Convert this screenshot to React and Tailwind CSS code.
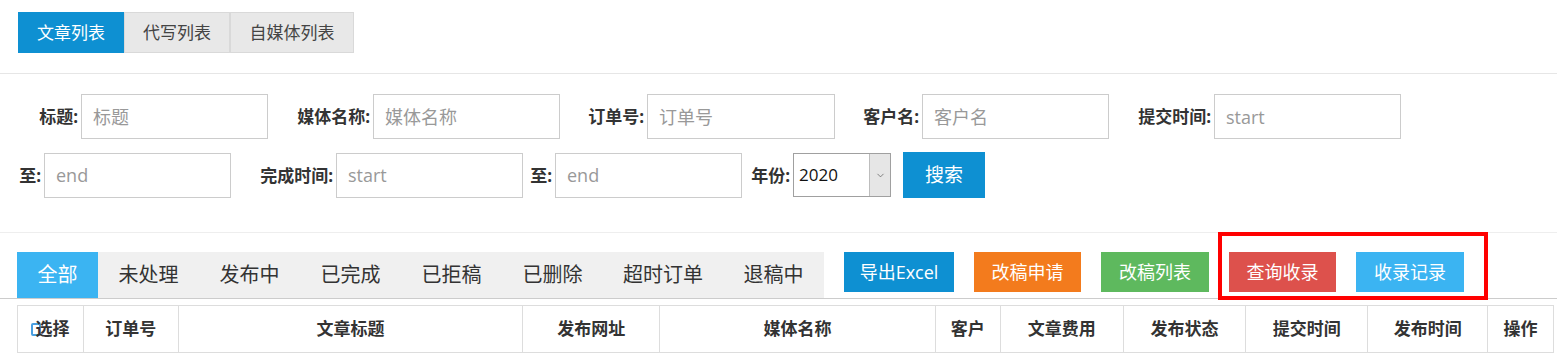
import { ChevronDown } from 'lucide-react';

const font = { fontFamily: '"Open Sans", "Noto Sans CJK SC", sans-serif' };

function Field({ label, labelW, placeholder, inputW = 'w-[187px]' }) {
    return (
        <div className="flex items-center">
            <div className={`${labelW} text-right text-[17px] font-bold text-[#333] leading-none`}>{label}</div>
            <input
                placeholder={placeholder}
                className={`${inputW} ml-[3px] h-[45px] border border-[#ccc] px-[11px] text-[18px] text-[#333] placeholder:text-[#999] outline-none`}
            />
        </div>
    );
}

export default function App() {
    const topTabs = [
        { label: '文章列表', w: 'w-[106px]', active: true },
        { label: '代写列表', w: 'w-[106px]' },
        { label: '自媒体列表', w: 'w-[124px]' },
    ];

    const statusTabs = [
        { label: '全部', w: 'w-[81px]', active: true },
        { label: '未处理', w: 'w-[101px]' },
        { label: '发布中', w: 'w-[101px]' },
        { label: '已完成', w: 'w-[101px]' },
        { label: '已拒稿', w: 'w-[101px]' },
        { label: '已删除', w: 'w-[101px]' },
        { label: '超时订单', w: 'w-[120px]' },
        { label: '退稿中', w: 'w-[101px]' },
    ];

    const actions = [
        { label: '导出Excel', cls: 'w-[110px] bg-[#0e90d2]' },
        { label: '改稿申请', cls: 'w-[107px] bg-[#f37b1d]' },
        { label: '改稿列表', cls: 'w-[108px] bg-[#5eb95e]' },
        { label: '查询收录', cls: 'w-[107px] bg-[#dd514c]' },
        { label: '收录记录', cls: 'w-[108px] bg-[#3bb4f2]' },
    ];

    const columns = [
        { label: '选择', w: 'w-[65px]', check: true },
        { label: '订单号', w: 'w-[95px]' },
        { label: '文章标题', w: 'w-[345px]' },
        { label: '发布网址', w: 'w-[137px]' },
        { label: '媒体名称', w: 'w-[276px]' },
        { label: '客户', w: 'w-[65px]' },
        { label: '文章费用', w: 'w-[123px]' },
        { label: '发布状态', w: 'w-[123px]' },
        { label: '提交时间', w: 'w-[122px]' },
        { label: '发布时间', w: 'w-[120px]' },
        { label: '操作', w: 'w-[66px]' },
    ];

    return (
        <div className="w-[1557px] h-[353px] overflow-hidden bg-white" style={font}>
            {/* Top tabs */}
            <div className="pt-[12px] pl-[18px] pb-[20px] border-b border-[#e6e6e6]">
                <div className="flex">
                    {topTabs.map((t) => (
                        <div
                            key={t.label}
                            className={`${t.w} h-[41px] flex items-center justify-center text-[17px] ${
                                t.active ? 'bg-[#0e90d2] text-white' : 'bg-[#e8e8e8] text-[#444] border border-[#d9d9d9]'
                            }`}
                        >
                            {t.label}
                        </div>
                    ))}
                </div>
            </div>

            {/* Search form */}
            <div className="pt-[20px] pb-[34px] pl-[17px] border-b border-[#eee]">
                <div className="flex items-center">
                    <Field label="标题:" labelW="w-[61px]" placeholder="标题" />
                    <Field label="媒体名称:" labelW="w-[102px]" placeholder="媒体名称" />
                    <Field label="订单号:" labelW="w-[84px]" placeholder="订单号" inputW="w-[188px]" />
                    <Field label="客户名:" labelW="w-[84px]" placeholder="客户名" />
                    <Field label="提交时间:" labelW="w-[102px]" placeholder="start" />
                </div>
                <div className="flex items-center mt-[13px]">
                    <Field label="至:" labelW="w-[24px]" placeholder="end" />
                    <Field label="完成时间:" labelW="w-[102px]" placeholder="start" />
                    <Field label="至:" labelW="w-[29px]" placeholder="end" />
                    <div className="w-[48px] text-right text-[17px] font-bold text-[#333] leading-none">年份:</div>
                    <div className="ml-[3px] w-[98px] h-[44px] flex border border-[#a0a0a0]">
                        <div className="flex-1 flex items-center pl-[5px] text-[17px] text-[#111]">2020</div>
                        <div className="w-[21px] bg-[#e6e6e6] border-l border-[#bdbdbd] flex items-center justify-center">
                            <ChevronDown className="w-[11px] h-[11px] text-[#555]" strokeWidth={1.5} />
                        </div>
                    </div>
                    <button className="ml-[12px] w-[82px] h-[46px] bg-[#0e90d2] text-white text-[19px]">搜索</button>
                </div>
            </div>

            {/* Status tabs + actions */}
            <div className="relative pt-[19px] border-b border-[#ccc]">
                <div className="flex items-start pl-[17px]">
                    <div className="flex h-[46px] bg-[#f0f0f0]">
                        {statusTabs.map((t) => (
                            <div
                                key={t.label}
                                className={`${t.w} flex items-center justify-center text-[20px] ${
                                    t.active ? 'bg-[#3bb4f2] text-white' : 'text-[#333]'
                                }`}
                            >
                                {t.label}
                            </div>
                        ))}
                    </div>
                    <div className="flex gap-[20px] ml-[20px]">
                        {actions.map((a) => (
                            <button key={a.label} className={`${a.cls} h-[40px] text-white text-[18px]`}>
                                {a.label}
                            </button>
                        ))}
                    </div>
                </div>
                {/* annotation */}
                <div className="absolute left-[1218px] top-[-1px] w-[270px] h-[68px] border-[4px] border-[#ff0000]" />
            </div>

            {/* Table header */}
            <div className="mt-[6px] ml-[17px] flex w-[1537px] border border-[#ddd]">
                {columns.map((c, i) => (
                    <div
                        key={c.label}
                        className={`${c.w} h-[46px] flex items-center justify-center text-[17px] font-bold text-[#333] ${
                            i > 0 ? 'border-l border-[#ddd]' : ''
                        }`}
                    >
                        {c.check && (
                            <span className="inline-block shrink-0 w-[10px] h-[13px] border-2 border-[#4a9fe0] rounded-[2px] mr-[-6px]" />
                        )}
                        <span className="relative">{c.label}</span>
                    </div>
                ))}
            </div>
        </div>
    );
}
